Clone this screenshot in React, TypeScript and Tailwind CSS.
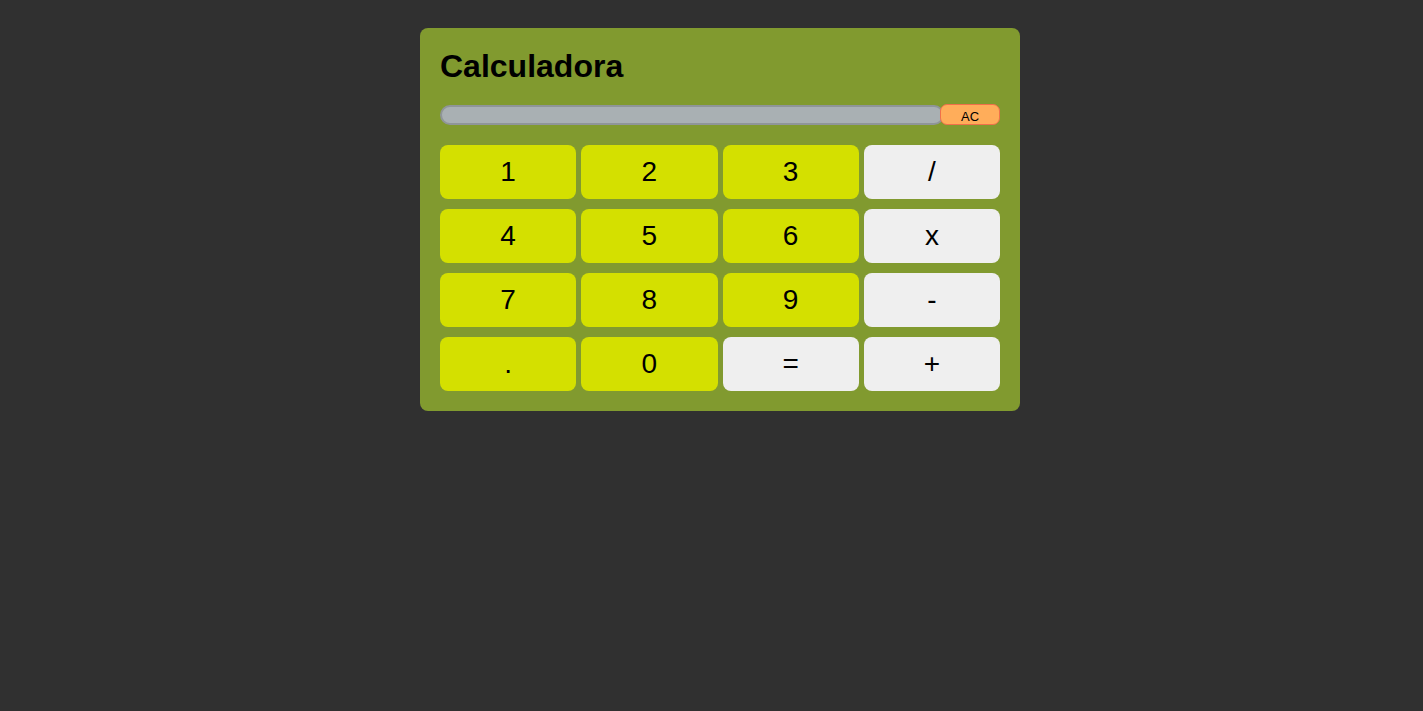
const KEYS: { label: string; op?: boolean }[] = [
  { label: "1" }, { label: "2" }, { label: "3" }, { label: "/", op: true },
  { label: "4" }, { label: "5" }, { label: "6" }, { label: "x", op: true },
  { label: "7" }, { label: "8" }, { label: "9" }, { label: "-", op: true },
  { label: "." }, { label: "0" }, { label: "=", op: true }, { label: "+", op: true },
];

export default function App() {
  return (
    <div className="min-h-[711px] bg-[#303030] pt-[28px] font-['Liberation_Sans',Arial,sans-serif]">
      <div className="ml-[420px] w-[600px] rounded-[8px] bg-[#819a2f] p-[20px]">
        <h1 className="text-[32px] font-bold leading-[37px] text-black">Calculadora</h1>
        <div className="mt-[19px] flex h-[22px] items-start">
          <div className="mt-[1px] h-[20px] w-[504px] rounded-[10px] border-2 border-[#8f9598] bg-[#a9b0b3]" />
          <div className="-ml-[4px] h-[21px] w-[60px] overflow-hidden rounded-[7px] border border-[#f0704a] bg-[#ffad5a] text-center">
            <span className="block pt-[5px] text-[13px] leading-[14px] text-black">AC</span>
          </div>
        </div>
        <div className="mt-[19px] grid grid-cols-4 gap-x-[5px] gap-y-[10px]">
          {KEYS.map((k) => (
            <button
              key={k.label}
              className={`h-[54px] rounded-[8px] text-[28px] text-black ${k.op ? "bg-[#efefef]" : "bg-[#d4e000]"}`}
            >
              {k.label}
            </button>
          ))}
        </div>
      </div>
    </div>
  );
}
